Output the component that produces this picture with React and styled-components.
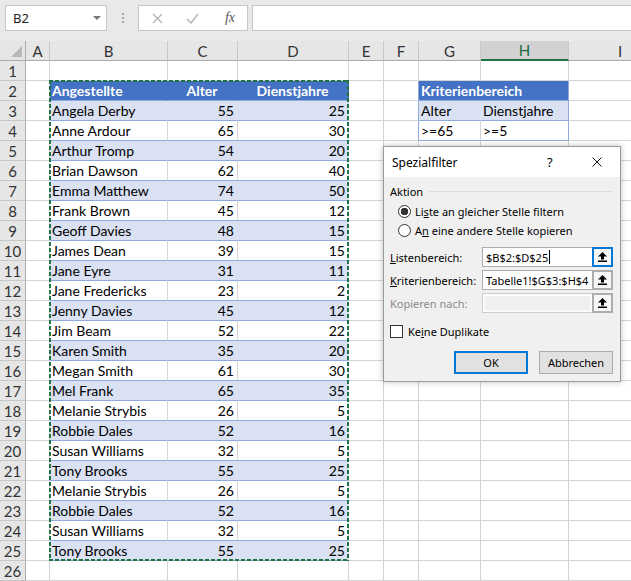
import React from "react";
import styled, { createGlobalStyle } from "styled-components";

const BLUE = "#4472c4";
const BAND = "#d9e1f2";
const RULE = "#8ea9db";
const GRID = "#d4d4d4";
const ANTS = "#217346";

const GlobalStyle = createGlobalStyle`
  body { margin: 0; background: #fff; }
  * { box-sizing: border-box; }
`;

const people = [
  ["Angela Derby", 55, 25],
  ["Anne Ardour", 65, 30],
  ["Arthur Tromp", 54, 20],
  ["Brian Dawson", 62, 40],
  ["Emma Matthew", 74, 50],
  ["Frank Brown", 45, 12],
  ["Geoff Davies", 48, 15],
  ["James Dean", 39, 15],
  ["Jane Eyre", 31, 11],
  ["Jane Fredericks", 23, 2],
  ["Jenny Davies", 45, 12],
  ["Jim Beam", 52, 22],
  ["Karen Smith", 35, 20],
  ["Megan Smith", 61, 30],
  ["Mel Frank", 65, 35],
  ["Melanie Strybis", 26, 5],
  ["Robbie Dales", 52, 16],
  ["Susan Williams", 32, 5],
  ["Tony Brooks", 55, 25],
  ["Melanie Strybis", 26, 5],
  ["Robbie Dales", 52, 16],
  ["Susan Williams", 32, 5],
  ["Tony Brooks", 55, 25],
];

const LETTERS = ["A", "B", "C", "D", "E", "F", "G", "H", "I"];

// builds the cell map for one sheet row
function rowCells(r) {
  const c = {};
  if (r === 2) {
    c.B = { text: "Angestellte", fill: BLUE, bold: true, rule: RULE };
    c.C = { text: "Alter", fill: BLUE, bold: true, align: "center", rule: RULE };
    c.D = { text: "Dienstjahre", fill: BLUE, bold: true, align: "center", rule: RULE };
    c.G = { text: "Kriterienbereich", fill: BLUE, bold: true, rule: RULE, span: 2, edge: RULE };
    c.H = null;
  }
  if (r >= 3 && r <= 25) {
    const [name, age, years] = people[r - 3];
    const fill = r % 2 === 1 ? BAND : null;
    c.B = { text: name, fill, rule: RULE };
    c.C = { text: age, fill, rule: RULE, align: "right" };
    c.D = { text: years, fill, rule: RULE, align: "right" };
  }
  if (r === 3) {
    c.G = { text: "Alter", fill: BAND, rule: RULE };
    c.H = { text: "Dienstjahre", fill: BAND, rule: RULE, edge: RULE };
  }
  if (r === 4) {
    c.G = { text: ">=65", rule: RULE };
    c.H = { text: ">=5", rule: RULE, edge: RULE };
  }
  if (r >= 2 && r <= 4) c.F = { edge: RULE };
  return c;
}

export default function App() {
  const rows = [];
  for (let r = 1; r <= 26; r++) {
    const cells = rowCells(r);
    rows.push(<RowHead key={"h" + r}>{r}</RowHead>);
    LETTERS.forEach((l) => {
      if (cells[l] === null) return;
      const c = cells[l] || {};
      rows.push(
        <Cell
          key={l + r}
          $fill={c.fill}
          $rule={c.rule}
          $edge={c.edge}
          $align={c.align}
          $bold={c.bold}
          $span={c.span}
        >
          {c.text}
        </Cell>
      );
    });
  }

  return (
    <Page>
      <GlobalStyle />
      <FormulaBar>
        <NameBox>
          <span>B2</span>
          <Caret />
        </NameBox>
        <Grip />
        <FxBox>
          <svg width="11" height="11" viewBox="0 0 11 11">
            <path d="M1 1 L10 10 M10 1 L1 10" stroke="#b3b3b3" strokeWidth="1.3" fill="none" />
          </svg>
          <svg width="13" height="11" viewBox="0 0 13 11">
            <path d="M1 6 L5 10 L12 1" stroke="#b3b3b3" strokeWidth="1.4" fill="none" />
          </svg>
          <Fx>fx</Fx>
        </FxBox>
        <FormulaInput />
      </FormulaBar>

      <Sheet>
        <Corner>
          <CornerMark />
        </Corner>
        {LETTERS.map((l) => (
          <ColHead key={l} $active={l === "H"}>
            {l}
          </ColHead>
        ))}
        {rows}
      </Sheet>

      <Ants />

      <Dialog>
        <TitleBar>
          <Title>Spezialfilter</Title>
          <Help>?</Help>
          <Close>
            <svg width="10" height="10" viewBox="0 0 10 10">
              <path d="M0.5 0.5 L9.5 9.5 M9.5 0.5 L0.5 9.5" stroke="#111" strokeWidth="1" fill="none" />
            </svg>
          </Close>
        </TitleBar>
        <Body>
          <Legend>
            <span>Aktion</span>
            <LegendRule />
          </Legend>
          <Choices>
            <Choice>
              <Radio $on />
              <span>
                Li<u>s</u>te an gleicher Stelle filtern
              </span>
            </Choice>
            <Choice>
              <Radio />
              <span>
                A<u>n</u> eine andere Stelle kopieren
              </span>
            </Choice>
          </Choices>
          <Fields>
            <Field>
              <FieldLabel>
                <u>L</u>istenbereich:
              </FieldLabel>
              <RefInput>
                $B$2:$D$25
                <TextCaret />
              </RefInput>
              <RefButton $focus>
                <UpIcon />
              </RefButton>
            </Field>
            <Field>
              <FieldLabel>
                <u>K</u>riterienbereich:
              </FieldLabel>
              <RefInput>Tabelle1!$G$3:$H$4</RefInput>
              <RefButton>
                <UpIcon />
              </RefButton>
            </Field>
            <Field>
              <FieldLabel $disabled>Kopieren nach:</FieldLabel>
              <RefInput $disabled />
              <RefButton>
                <UpIcon />
              </RefButton>
            </Field>
          </Fields>
          <CheckRow>
            <CheckBox />
            <span>
              Ke<u>i</u>ne Duplikate
            </span>
          </CheckRow>
          <Buttons>
            <Btn $primary>OK</Btn>
            <Btn>Abbrechen</Btn>
          </Buttons>
        </Body>
      </Dialog>
    </Page>
  );
}

function UpIcon() {
  return (
    <svg width="9" height="10" viewBox="0 0 9 10">
      <path d="M4.5 0 L9 4.5 L6 4.5 L6 7.5 L3 7.5 L3 4.5 L0 4.5 Z" fill="#000" />
      <rect x="0" y="8.5" width="9" height="1.5" fill="#000" />
    </svg>
  );
}

const Page = styled.div`
  position: relative;
  width: 631px;
  height: 581px;
  overflow: hidden;
  background: #fff;
  font-family: Lato, "Liberation Sans", sans-serif;
`;

const FormulaBar = styled.div`
  display: flex;
  align-items: flex-start;
  height: 41px;
  padding: 5px 0 0 5px;
  background: #e9e9e9;
`;

const NameBox = styled.div`
  display: flex;
  align-items: center;
  justify-content: space-between;
  width: 102px;
  height: 26px;
  padding: 0 5px 0 7px;
  background: #fff;
  border: 1px solid #c6c6c6;
  font-family: "Noto Sans", sans-serif;
  font-size: 13px;
  color: #222;
`;

const Caret = styled.span`
  width: 0;
  height: 0;
  border-left: 4px solid transparent;
  border-right: 4px solid transparent;
  border-top: 4px solid #777;
`;

const Grip = styled.div`
  width: 31px;
  height: 26px;
  display: flex;
  align-items: center;
  justify-content: center;
  &::before {
    content: "";
    width: 0;
    height: 10px;
    border-left: 2px dotted #a8a8a8;
  }
`;

const FxBox = styled.div`
  display: flex;
  align-items: center;
  width: 110px;
  height: 26px;
  padding: 0 12px 0 13px;
  gap: 23px;
  background: #fff;
  border: 1px solid #c6c6c6;
`;

const Fx = styled.span`
  margin-left: auto;
  font-family: "Liberation Serif", serif;
  font-style: italic;
  font-size: 14px;
  color: #555;
`;

const FormulaInput = styled.div`
  flex: 1;
  height: 26px;
  margin-left: 4px;
  margin-right: -2px;
  background: #fff;
  border: 1px solid #c6c6c6;
`;

const Sheet = styled.div`
  display: grid;
  grid-template-columns: 26px 24px 118px 70px 111px 35px 35px 62px 88px 103px;
  grid-auto-rows: 20px;
  width: 672px;
  font-size: 14px;
`;

const Corner = styled.div`
  display: flex;
  align-items: flex-end;
  justify-content: flex-end;
  padding: 0 3px 3px 0;
  background: #e6e6e6;
  border-right: 1px solid #ababab;
  border-bottom: 1px solid #ababab;
`;

const CornerMark = styled.span`
  width: 0;
  height: 0;
  border-left: 11px solid transparent;
  border-bottom: 11px solid #b9b9b9;
`;

const ColHead = styled.div`
  display: flex;
  align-items: center;
  justify-content: center;
  font-size: 15px;
  background: ${(p) => (p.$active ? "#d2d2d2" : "#e6e6e6")};
  color: ${(p) => (p.$active ? "#1e6b3f" : "#333")};
  border-right: 1px solid #c8c8c8;
  border-bottom: ${(p) => (p.$active ? `2px solid ${ANTS}` : "1px solid #ababab")};
`;

const RowHead = styled.div`
  display: flex;
  align-items: center;
  justify-content: center;
  padding-top: 1px;
  font-size: 15px;
  background: #e6e6e6;
  color: #333;
  border-right: 1px solid #ababab;
  border-bottom: 1px solid #c8c8c8;
`;

const Cell = styled.div`
  grid-column: span ${(p) => p.$span || 1};
  display: flex;
  align-items: flex-end;
  justify-content: ${(p) =>
    p.$align === "right" ? "flex-end" : p.$align === "center" ? "center" : "flex-start"};
  padding: 0 3px 1px 2px;
  overflow: hidden;
  white-space: nowrap;
  background: ${(p) => p.$fill || "#fff"};
  color: ${(p) => (p.$fill === BLUE ? "#fff" : "#000")};
  font-weight: ${(p) => (p.$bold ? 700 : 400)};
  border-right: 1px solid ${(p) => p.$edge || p.$fill || GRID};
  border-bottom: 1px solid ${(p) => p.$rule || GRID};
`;

const Ants = styled.div`
  position: absolute;
  left: 49px;
  top: 80px;
  width: 300px;
  height: 481px;
  pointer-events: none;
  background:
    repeating-linear-gradient(90deg, ${ANTS} 0 4px, transparent 4px 6px) top left / 100% 2px no-repeat,
    repeating-linear-gradient(90deg, ${ANTS} 0 4px, transparent 4px 6px) bottom left / 100% 2px no-repeat,
    repeating-linear-gradient(180deg, ${ANTS} 0 4px, transparent 4px 6px) top left / 2px 100% no-repeat,
    repeating-linear-gradient(180deg, ${ANTS} 0 4px, transparent 4px 6px) top right / 2px 100% no-repeat;
`;

const Dialog = styled.div`
  position: absolute;
  left: 383px;
  top: 146px;
  width: 238px;
  height: 236px;
  display: flex;
  flex-direction: column;
  background: #f0f0f0;
  border: 1px solid #9a9a9a;
  box-shadow: 0 0 6px rgba(0, 0, 0, 0.25);
  font-family: "Noto Sans", sans-serif;
  font-size: 11px;
  color: #000;
`;

const TitleBar = styled.div`
  display: flex;
  align-items: center;
  height: 30px;
  padding: 0 18px 0 8px;
  background: #fff;
`;

const Title = styled.div`
  flex: 1;
  font-size: 12px;
`;

const Help = styled.div`
  width: 45px;
  font-size: 13px;
`;

const Close = styled.div`
  display: flex;
  align-items: center;
`;

const Body = styled.div`
  display: flex;
  flex-direction: column;
  padding: 6px 7px 0 6px;
`;

const Legend = styled.div`
  display: flex;
  align-items: center;
  height: 16px;
  gap: 6px;
`;

const LegendRule = styled.div`
  flex: 1;
  height: 1px;
  background: #dcdcdc;
`;

const Choices = styled.div`
  display: flex;
  flex-direction: column;
  margin-top: 3px;
  padding-left: 8px;
`;

const Choice = styled.div`
  display: flex;
  align-items: center;
  gap: 4px;
  height: 19px;
`;

const Radio = styled.span`
  width: 13px;
  height: 13px;
  border-radius: 50%;
  border: 1px solid #333;
  background: ${(p) => (p.$on ? "radial-gradient(circle, #333 0 3.5px, #fff 4px)" : "#fff")};
`;

const Fields = styled.div`
  display: flex;
  flex-direction: column;
  gap: 3px;
  margin-top: 7px;
`;

const Field = styled.div`
  display: flex;
  align-items: center;
  height: 20px;
`;

const FieldLabel = styled.div`
  width: 92px;
  white-space: nowrap;
  color: ${(p) => (p.$disabled ? "#8a8a8a" : "#000")};
`;

const RefInput = styled.div`
  display: flex;
  align-items: center;
  width: 111px;
  height: 20px;
  padding-left: 3px;
  white-space: nowrap;
  overflow: hidden;
  background: ${(p) => (p.$disabled ? "#f0f0f0" : "#fff")};
  border: 1px solid ${(p) => (p.$disabled ? "#cccccc" : "#adadad")};
  box-shadow: ${(p) => (p.$disabled ? "inset 0 0 0 2px #fbfbfb" : "none")};
`;

const TextCaret = styled.span`
  width: 1px;
  height: 14px;
  margin-left: 1px;
  background: #000;
`;

const RefButton = styled.div`
  display: flex;
  align-items: center;
  justify-content: center;
  width: 21px;
  height: 20px;
  margin-left: -1px;
  background: #f7f7f7;
  border: ${(p) => (p.$focus ? "2px solid #0078d7" : "2px solid #adadad")};
`;

const CheckRow = styled.div`
  display: flex;
  align-items: center;
  gap: 5px;
  height: 16px;
  margin-top: 10px;
`;

const CheckBox = styled.span`
  width: 13px;
  height: 13px;
  background: #fff;
  border: 1px solid #333;
`;

const Buttons = styled.div`
  display: flex;
  justify-content: flex-end;
  gap: 11px;
  margin-top: 12px;
`;

const Btn = styled.div`
  display: flex;
  align-items: center;
  justify-content: center;
  width: 74px;
  height: 23px;
  background: #e1e1e1;
  border: ${(p) => (p.$primary ? "2px solid #0078d7" : "1px solid #adadad")};
`;
